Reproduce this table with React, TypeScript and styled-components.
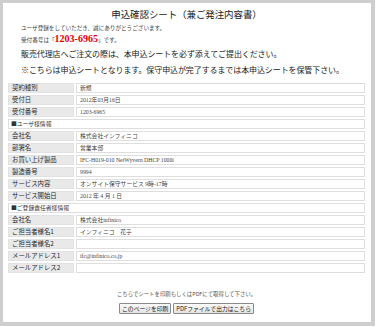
import { createGlobalStyle, styled } from "styled-components";

const GlobalStyle = createGlobalStyle`
  html, body {
    margin: 0;
    padding: 0;
    background: #ffffff;
  }
  body {
    font-family: "Noto Sans CJK JP", "Noto Sans", sans-serif;
    color: #333;
  }
`;

const Frame = styled.div`
  box-sizing: border-box;
  width: 375px;
  height: 326px;
  border: 3px solid #cecece;
  border-right-width: 4px;
  border-bottom-width: 4px;
  background: #fff;
  padding: 0 4px 0 3px;
  display: flex;
  flex-direction: column;
`;

const Title = styled.h1`
  margin: 0;
  padding-top: 2px;
  height: 18px;
  line-height: 18px;
  text-align: center;
  font-size: 9.5px;
  font-weight: normal;
  color: #222;
  letter-spacing: -0.1px;
`;

const Intro = styled.div`
  padding-left: 15px;
  font-size: 5.6px;
  line-height: 11px;
  color: #444;
`;

const Number = styled.span`
  font-family: "Liberation Serif", serif;
  font-weight: bold;
  font-size: 10px;
  line-height: 10px;
  color: #e00000;
`;

const Notice = styled.p<{ $top: number }>`
  margin: ${(p) => p.$top}px 0 0 15px;
  font-size: 8px;
  line-height: 12px;
  color: #1a1a1a;
  letter-spacing: -0.1px;
`;

const Table = styled.table`
  margin-top: 5px;
  width: 100%;
  border-collapse: separate;
  border-spacing: 2px;
`;

const Label = styled.th`
  box-sizing: border-box;
  width: 66px;
  height: 10px;
  padding: 0 0 0 3px;
  background: #e9e9e9;
  border: 1px solid #e2e2e2;
  text-align: left;
  font-weight: normal;
  font-size: 6.4px;
  line-height: 8px;
  color: #2a2a2a;
  white-space: nowrap;
`;

const Value = styled.td`
  box-sizing: border-box;
  height: 10px;
  padding: 0 0 0 3px;
  border: 1px solid #dedede;
  font-family: "Liberation Serif", "Noto Sans CJK JP", serif;
  font-size: 5.8px;
  line-height: 8px;
  color: #444;
  white-space: nowrap;
`;

const Section = styled.td`
  box-sizing: border-box;
  height: 10px;
  padding: 0 0 0 2px;
  border: 1px solid #dedede;
  font-size: 5.8px;
  line-height: 8px;
  color: #333;
`;

const Footer = styled.div`
  margin-top: 15px;
  display: flex;
  flex-direction: column;
  align-items: center;
  gap: 5px;
`;

const FooterText = styled.div`
  font-size: 5.4px;
  line-height: 8px;
  color: #555;
`;

const Buttons = styled.div`
  display: flex;
  gap: 2px;
`;

const Button = styled.button`
  box-sizing: border-box;
  height: 11px;
  padding: 0 2px;
  border: 1px solid #8a8a8a;
  border-radius: 1px;
  background: linear-gradient(#fafafa, #e4e4e4);
  font-family: "Noto Sans CJK JP", sans-serif;
  font-size: 5.8px;
  line-height: 9px;
  color: #222;
`;

type Row =
  | { kind: "row"; label: string; value: string }
  | { kind: "section"; title: string };

const rows: Row[] = [
  { kind: "row", label: "契約種別", value: "新規" },
  { kind: "row", label: "受付日", value: "2012年03月16日" },
  { kind: "row", label: "受付番号", value: "1203-6965" },
  { kind: "section", title: "■ユーザ様情報" },
  { kind: "row", label: "会社名", value: "株式会社インフィニコ" },
  { kind: "row", label: "部署名", value: "営業本部" },
  { kind: "row", label: "お買い上げ製品", value: "IFC-H019-010 NetWyvern DHCP 1000i" },
  { kind: "row", label: "製造番号", value: "9994" },
  { kind: "row", label: "サービス内容", value: "オンサイト保守サービス 9時-17時" },
  { kind: "row", label: "サービス開始日", value: "2012 年 4 月 1 日" },
  { kind: "section", title: "■ご登録責任者様情報" },
  { kind: "row", label: "会社名", value: "株式会社infinico" },
  { kind: "row", label: "ご担当者様名1", value: "インフィニコ　花子" },
  { kind: "row", label: "ご担当者様名2", value: "" },
  { kind: "row", label: "メールアドレス1", value: "ifc@infinico.co.jp" },
  { kind: "row", label: "メールアドレス2", value: "" },
];

export default function App() {
  return (
    <>
      <GlobalStyle />
      <Frame>
        <Title>申込確認シート（兼ご発注内容書）</Title>
        <Intro>
          ユーザ登録をしていただき、誠にありがとうございます。
          <br />
          受付番号は「<Number>1203-6965</Number>」です。
        </Intro>
        <Notice $top={2}>販売代理店へご注文の際は、本申込シートを必ず添えてご提出ください。</Notice>
        <Notice $top={4}>※こちらは申込シートとなります。保守申込が完了するまでは本申込シートを保管下さい。</Notice>
        <Table>
          <tbody>
            {rows.map((r, i) =>
              r.kind === "section" ? (
                <tr key={i}>
                  <Section colSpan={2}>{r.title}</Section>
                </tr>
              ) : (
                <tr key={i}>
                  <Label>{r.label}</Label>
                  <Value>{r.value}</Value>
                </tr>
              )
            )}
          </tbody>
        </Table>
        <Footer>
          <FooterText>こちらでシートを印刷もしくはPDFにて取得して下さい。</FooterText>
          <Buttons>
            <Button>このページを印刷</Button>
            <Button>PDFファイルで出力はこちら</Button>
          </Buttons>
        </Footer>
      </Frame>
    </>
  );
}
